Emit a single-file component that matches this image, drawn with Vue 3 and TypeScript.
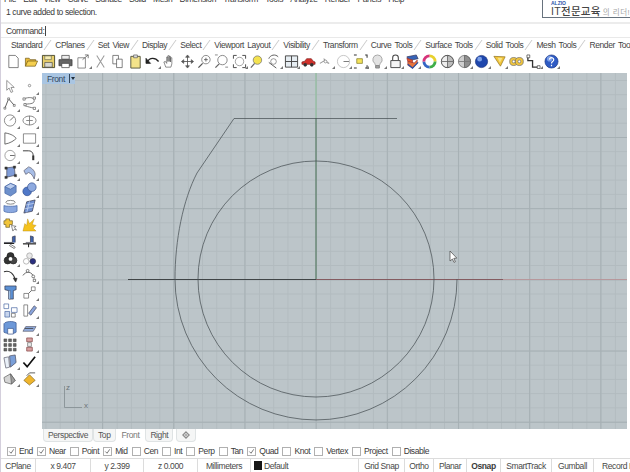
<script setup lang="ts">
interface Shape {
  d: string;
  fill?: string;
  stroke?: string;
  w?: number;
}

interface Icon {
  id: string;
  shapes: Shape[];
  more?: boolean;
}

const ink = "#3a3a3a";
const blue = "#6d90cc";
const yellow = "#f2c53a";

const circle = (x: number, y: number, r: number) =>
  `M${x - r} ${y}a${r} ${r} 0 1 0 ${r * 2} 0a${r} ${r} 0 1 0 ${-r * 2} 0z`;

const line = (d: string, stroke = ink, w = 0.9): Shape => ({ d, stroke, w, fill: "none" });
const solid = (d: string, fill: string, stroke = "#555", w = 0.7): Shape => ({ d, fill, stroke, w });

const menus = ["File", "Edit", "View", "Curve", "Surface", "Solid", "Mesh", "Dimension", "Transform", "Tools", "Analyze", "Render", "Panels", "Help"];
const tabs = ["Standard", "CPlanes", "Set View", "Display", "Select", "Viewport Layout", "Visibility", "Transform", "Curve Tools", "Surface Tools", "Solid Tools", "Mesh Tools", "Render Tools"];

const topIcons: Icon[] = [
  { id: "new", shapes: [solid("M3 1.5h7l3 3v10H3z", "#fff", "#444")] },
  { id: "open", shapes: [solid("M1.5 13V4.5h4l1 1.5h6v2", "#e7b93a", "#6b5414"), solid("M1.5 13l2.5-5.5h10.5L12 13z", "#f5cf4e", "#6b5414")] },
  { id: "save", shapes: [solid("M1.5 1.5h13v13h-13z", "#e8cf6a", "#4a4a30", 1), solid("M4 9h8v5H4z", "#d9d9cf", "#444"), solid("M4 2h7v4H4z", "#f7eeb4", "#665")] },
  { id: "print", shapes: [solid("M4 1.5h8v4H4z", "#eee", "#333"), solid("M1 6h14v6.5H1z", "#666", "#333"), solid("M4 10h8v4.5H4z", "#fff", "#333")] },
  { id: "import", more: true, shapes: [solid("M2 4h8v11H2z", "#fff", "#555"), line("M7 6l6-5M9.5 1H13v3.5", "#666")] },
  { id: "cut", shapes: [line("M4 1.5l8 13M12 1.5l-8 13", "#9a9a9a", 1.1)] },
  { id: "copy", shapes: [solid("M3 1.5h6v9H3z", "#fff", "#444"), solid("M7 5.5h6v9H7z", "#fff", "#444")] },
  { id: "paste", shapes: [solid("M3 2.5h10v12.5H3z", "#f4e38a", "#55553f", 1), solid("M6 1h4v3H6z", "#ddd", "#555")] },
  { id: "undo", more: true, shapes: [line("M2.5 8.5C5 3.5 11 3.5 14.5 8", "#222", 1.4), solid("M1 4.5l5 5.5H1z", "#222", "#222")] },
  { id: "hand", shapes: [solid("M4 14L2 8.5l1.6-.6L5 10V3.2h1.3V8V1.8h1.4V8V2.6h1.4V8.5V4h1.4v6.5l-1 3.5z", "#fff", "#555")] },
  { id: "pan", shapes: [line("M8 2v12M3 8h10", "#555"), solid("M8 1l2 2.5H6zM8 15l2-2.5H6zM1.5 8l2.5-2v4zM14.5 8L12 6v4z", "#555")] },
  { id: "zoom", shapes: [solid(circle(9.5, 6, 4.5), "#fff", "#555"), line("M6 10l-4.5 4.5", "#555", 1.4), line("M7.5 6h4M9.5 4v4", "#555")] },
  { id: "zoomwin", shapes: [{ d: circle(9, 6.5, 5), fill: "#fff", stroke: "#777", w: 0.9 }, line("M5.5 10.5l-4 4", "#666", 1.4), line("M1 1h3M12 14h3", "#777")] },
  { id: "zoomext", more: true, shapes: [solid(circle(8, 8, 4.5), "#fff", "#777"), line("M1.5 5V1.5H5M11 1.5h3.5V5M1.5 11v3.5H5M11 14.5h3.5V11", "#444", 1)] },
  { id: "zoomsel", shapes: [solid(circle(9, 6.5, 4.5), "#f4e24f", "#666"), line("M6 10l-4 4.5", "#666", 1.4)] },
  { id: "rotate", more: true, shapes: [line("M3 5A6 6 0 0 1 13 3M3 9l8 6", "#555", 1), solid(circle(8, 8, 3), "#fff", "#666")] },
  { id: "layout", more: true, shapes: [solid("M1.5 2h13v12h-13z", "#e6edf2", "#444", 1), line("M8 2v12M1.5 8h13", "#444", 1)] },
  { id: "car", shapes: [solid("M1 11V8.5l3-.8L6 5h5l2 2.7 2 .8V11z", "#d3322c", "#7c1d1a"), solid(circle(4.5, 11.5, 1.6), "#333", "#333"), solid(circle(11.5, 11.5, 1.6), "#333", "#333")] },
  { id: "osnap", more: true, shapes: [line("M2 10l5-3 5 3M6 5l5 5", "#999", 1.1), solid(circle(8, 8, 1.5), "#fff", "#777")] },
  { id: "clock", more: true, shapes: [solid(circle(8, 8, 6.5), "#fff", "#aaa"), line("M8 8h6", "#666")] },
  { id: "points", more: true, shapes: [solid("M4 5h6v5H4z", "#f5e35b", "#776f1a"), line("M1 1h3M13 1h2v3M1 15h3M13 15h2v-3", "#333", 1.1)] },
  { id: "bulb", more: true, shapes: [solid("M8 1a5 5 0 0 1 3 9l-1 2.5H6L5 10a5 5 0 0 1 3-9z", "#e3e3e3", "#888"), solid("M6 12.5h4V15H6z", "#aaa", "#666")] },
  { id: "lock", more: true, shapes: [line("M5 7V4a3 3 0 0 1 6 0v3", "#444", 1.1), solid("M3 7h10v7.5H3z", "#f4f4f4", "#444", 1)] },
  { id: "layer", more: true, shapes: [solid("M2 3l10-2 2 4-10 2z", "#3764b8", "#335"), solid("M2 4.5l6 2v3L3 8z", "#e8572a", "#933"), solid("M3 8l7 1.5 3-3v3l-5 5.5-5-3z", "#e8743b", "#933"), line("M3 11l5 4 6-6", "#2a4fa0", 1.3)] },
  { id: "wheel", shapes: [line("M8 2a6 6 0 0 1 6 6", "#e8d12e", 3), line("M14 8a6 6 0 0 1-6 6", "#3fae49", 3), line("M8 14a6 6 0 0 1-6-6", "#3466c4", 3), line("M2 8a6 6 0 0 1 6-6", "#d6337a", 3)] },
  { id: "sphere1", shapes: [solid(circle(8, 8, 6.5), "#bdbdbd", "#444", 1), solid("M8 1.5a6.5 6.5 0 0 0 0 13z", "#eee", "#444"), line("M1.5 8h13", "#666")] },
  { id: "sphere2", more: true, shapes: [solid(circle(8, 8, 6.5), "#cfcfcf", "#555"), solid("M8 1.5a6.5 6.5 0 0 1 0 13z", "#8f8f8f", "#555"), line("M1.5 8h13", "#777")] },
  { id: "sphere3", more: true, shapes: [solid(circle(8, 8, 6.5), "#1f47ad", "#18317a"), solid(circle(6, 5.5, 2.6), "#7da1e8", "none")] },
  { id: "arrow", more: true, shapes: [solid("M2 2.5l12 .5-5 10z", "#f2c53a", "#8a6d1d"), solid("M6 4l5 .3-2.6 5z", "#f7e48a", "none")] },
  { id: "gears", shapes: [solid(circle(5, 8, 4.3), "#f0c53f", "#666"), solid(circle(11, 8, 4.3), "#f0c53f", "#666"), solid(circle(5, 8, 1.5), "#fff", "#666"), solid(circle(11, 8, 1.5), "#fff", "#666")] },
  { id: "dims", more: true, shapes: [line("M2 2v5h5v7h7", "#333", 1.4), solid("M1 1h3v3H1zM12 12.5h3v3h-3z", "#fff", "#333")] },
  { id: "help", more: true, shapes: [solid(circle(8, 8, 7), "#2e5bc4", "#1d3a85"), solid(circle(6, 5, 3), "#7c9fe8", "none"), line("M5.8 6a2.3 2.2 0 1 1 3.4 2C8.2 8.6 8 9 8 10.2M8 11.4v1.6", "#fff", 1.3)] },
];

const sideIcons: Icon[] = [
  { id: "cursor", shapes: [solid("M4 1.5l8 7.5H8.5l2 4.5-2 .8-2-4.7L4 12z", "#fff", "#666")] },
  { id: "point", more: true, shapes: [solid(circle(8, 7, 1.3), "#fff", "#666")] },
  { id: "polyline", more: true, shapes: [line("M2 13L6 3l6 7", "#444"), solid("M1 12h2v2H1zM5 2h2v2H5zM11 9h2v2h-2z", "#fff", "#444", 0.6)] },
  { id: "cpcurve", more: true, shapes: [line("M2 3C7 1 13 1 13 5S7 8 3 9s9 4 11 4", "#666"), solid("M1 2h2.4v2.4H1zM12 1h2.4v2.4H12zM2 8h2.4v2.4H2zM12 12h2.4v2.4H12z", "#fff", "#444", 0.6)] },
  { id: "circle", more: true, shapes: [solid(circle(7.5, 8, 6), "#fff", "#555"), line("M7.5 8l4-4", "#555")] },
  { id: "ellipse", more: true, shapes: [solid("M1 8a7 4.8 0 1 0 14 0a7 4.8 0 1 0-14 0z", "#fff", "#555"), line("M8 3v10M4.5 8h7", "#777")] },
  { id: "arc", more: true, shapes: [line("M2 2C9 3 13 6 14 8c-2 2-6 5-12 6V2", "#555")] },
  { id: "rect", more: true, shapes: [solid("M1.5 3h13v10h-13z", "#fff", "#555")] },
  { id: "polygon", more: true, shapes: [solid(circle(7.5, 8, 5.5), "#fff", "#777"), line("M7.5 8h5", "#555")] },
  { id: "fillet", more: true, shapes: [line("M1 3h6c4 0 5 3 5 6", "#333", 1), line("M12 8v5", "#333", 2.2)] },
  { id: "patch", more: true, shapes: [solid("M4 3l8-1 1 9-9 2z", "#7f9cd8", "#445"), solid("M2 2h2.5v2.5H2zM11 1h2.5v2.5H11zM2 12h2.5v2.5H2zM12 10h2.5v2.5H12z", "#333", "#333", 0.4)] },
  { id: "loft", more: true, shapes: [solid("M2 6l5-4c4 1 7 5 7 8l-1 5c-1-3-3-6-6-7l-3 2z", "#a7bde6", "#556")] },
  { id: "cube", shapes: [solid("M2 5l6-3.5L14 4v7l-6 4-6-3z", blue, "#3f5f9f"), solid("M2 5l6 2.7L14 4 8 1.5z", "#b9ccee", "#3f5f9f")] },
  { id: "spheres", more: true, shapes: [solid(circle(5.5, 10, 4.6), "#4f78c8", "#34508c"), solid(circle(10.5, 5.5, 4.6), "#8eaae0", "#34508c")] },
  { id: "extrude", shapes: [line("M3 3.5a5 2 0 1 0 10 0a5 2 0 1 0-10 0", "#777"), solid("M1 7c2 1 12 1 14 0v6c-2 2-12 2-14 0z", "#8aa8e0", "#3f5f9f")] },
  { id: "mesh", more: true, shapes: [solid("M5 3l9-2-3 12-9 2z", "#6f8fd0", "#334"), line("M8 2.5l-3 12M4 6.5l9 -2M3 10.5l9-2", "#cfe0f7", 0.7)] },
  { id: "pieces", shapes: [solid("M3 2h4v2h3v4H7v3H3V8H1V4h2z", yellow, "#6d5a20"), solid("M9 9l1.5 6 1.5-2 2.5 1L12 11l2-1z", "#fff", "#555")] },
  { id: "burst", shapes: [solid("M1 15L3 7l2 2 1-7 2 5 5-5-2 6 4 1-3 3 3 3z", "#f5c21c", "#a97f10", 0.4)] },
  { id: "trim", shapes: [solid("M1 9h9V3l3-1v7", "#3f63ab", "#334"), line("M1 10h11", "#222", 1.3), solid("M8 11l5 3-1 1.5-5-3z", "#fff", "#444")] },
  { id: "split", shapes: [solid("M4 9h5V2l3 1v6h3", "#3f63ab", "#334"), line("M1 10.5h14", "#222", 1.3), line("M7 10.5V14", "#222", 1.1)] },
  { id: "boolean", more: true, shapes: [solid(circle(8, 5.5, 3.8), "#333", "#222"), solid(circle(5, 10, 3.8), "#333", "#222"), solid(circle(11, 10, 3.8), "#444", "#222"), solid(circle(8, 8.5, 2), "#fff", "none")] },
  { id: "booldiff", more: true, shapes: [solid(circle(8, 5, 3), "#e9e9e9", "#999"), solid(circle(4.5, 11, 3), "#fff", "#999"), solid(circle(11.5, 11, 3), "#2a2f80", "#334")] },
  { id: "curvearrow", shapes: [line("M1 4c6-2 11 2 12 9", "#333", 1.1), solid("M13.5 15l-2.5-4h4z", "#333", "#333")] },
  { id: "curvepts", more: true, shapes: [line("M1 8c3-5 10-5 12 3", "#555"), solid(circle(6, 3, 1.5), "#fff", "#444"), solid(circle(12, 9, 1.5), "#fff", "#444"), solid("M12 12h2.5v2.5H12z", "#fff", "#444")] },
  { id: "tee", shapes: [solid("M2 1h12v4l-3 1v9H6V6L2 5z", "#5b90d4", "#334"), solid("M6 6h2v9H6z", "#a6c5ea", "#334", 0.3)] },
  { id: "scale", more: true, shapes: [solid("M2 9h5v5H2z", "#fff", "#555"), solid("M10 2h4v4h-4z", "#fff", "#555"), line("M7 9l3-3", "#555")] },
  { id: "group", shapes: [solid("M1 1h5v5H1z", "#fff", "#3f5f9f"), solid("M9 5h6v5H9z", "#fff", "#3f5f9f"), solid("M2 9h5v6H2z", "#c8d5ee", "#3f5f9f"), solid("M9 11h4v4H9z", "#fff", "#555")] },
  { id: "ruler", more: true, shapes: [solid("M2 2h4v12H2z", "#fff", "#555"), solid("M7 11l6-8 2.5 2-6 8z", "#8aa5dc", "#445")] },
  { id: "block", shapes: [solid("M1 4c2-3 10-3 13-1v10c-2 2-10 2-13 0z", "#6d98d8", "#334e88"), solid("M5 9h6v6H5z", "#fff", "#334e88")] },
  { id: "plane", more: true, shapes: [solid("M4 7h11l-3 5H1z", "#93aee0", "#556"), line("M3 9h9", "#333", 0.8)] },
  { id: "array", shapes: [solid("M1 2h3v3H1zM6 2h3v3H6zM11 2h3v3h-3zM1 7h3v3H1zM6 7h3v3H6zM11 7h3v3h-3zM1 12h3v3H1zM6 12h3v3H6zM11 12h3v3h-3z", "#666", "#333", 0.5)] },
  { id: "chain", more: true, shapes: [solid("M5 1h6v4H5z", "#d8a0a0", "#7b3a3a"), solid("M6 6h4v4H6z", "#eee", "#666"), solid("M5 11h6v4H5z", "#d8a0a0", "#7b3a3a")] },
  { id: "pages", more: true, shapes: [solid("M1 4l5-1 1 11-4 1z", "#eaf0f8", "#556"), solid("M7 2l6-1 1 8-6 5z", "#7a9fd8", "#445")] },
  { id: "check", shapes: [line("M1.5 9l4 4.5L14 3", "#111", 1.8)] },
  { id: "shell", more: true, shapes: [solid("M1 7l7-4 5 7-4 4-7-2z", "#d5d5d5", "#555"), solid("M8 3l5 7-4 4z", "#9f9f9f", "#555")] },
  { id: "diamond", more: true, shapes: [line("M5 5l3-3h6", "#444"), solid("M8 4l6 6-6 5-6-5z", "#efb52d", "#7e6421")] },
];

const snaps = [
  { label: "End", on: true },
  { label: "Near", on: true },
  { label: "Point", on: false },
  { label: "Mid", on: true },
  { label: "Cen", on: false },
  { label: "Int", on: false },
  { label: "Perp", on: false },
  { label: "Tan", on: false },
  { label: "Quad", on: true },
  { label: "Knot", on: false },
  { label: "Vertex", on: false },
  { label: "Project", on: false },
  { label: "Disable", on: false },
];

const coords = [
  { text: "CPlane", width: 35 },
  { text: "x 9.407", width: 55 },
  { text: "y 2.399", width: 53 },
  { text: "z 0.000", width: 54 },
  { text: "Millimeters", width: 53 },
];

const panes = [
  { text: "Grid Snap", width: 46 },
  { text: "Ortho", width: 29 },
  { text: "Planar", width: 33 },
  { text: "Osnap", width: 34, bold: true },
  { text: "SmartTrack", width: 51 },
  { text: "Gumball", width: 42 },
];
</script>

<template>
  <div class="app">
    <nav class="menu">
      <span v-for="m in menus" :key="m">{{ m }}</span>
    </nav>
    <div class="history">1 curve added to selection.</div>
    <div class="command">
      <span>Command:</span>
      <i class="caret" />
    </div>

    <div class="tabs">
      <span v-for="t in tabs" :key="t" class="tab">{{ t }}</span>
    </div>

    <div class="toolbar">
      <span v-for="icon in topIcons" :key="icon.id" class="tool" :class="{ more: icon.more }">
        <svg viewBox="0 0 16 16" width="15" height="15">
          <path
            v-for="(s, i) in icon.shapes"
            :key="i"
            :d="s.d"
            :fill="s.fill ?? 'none'"
            :stroke="s.stroke ?? 'none'"
            :stroke-width="s.w ?? 1"
          />
        </svg>
      </span>
    </div>

    <div class="main">
      <aside class="side">
        <span v-for="icon in sideIcons" :key="icon.id" class="tool" :class="{ more: icon.more }">
          <svg viewBox="0 0 16 16" width="15" height="15">
            <path
              v-for="(s, i) in icon.shapes"
              :key="i"
              :d="s.d"
              :fill="s.fill ?? 'none'"
              :stroke="s.stroke ?? 'none'"
              :stroke-width="s.w ?? 1"
            />
          </svg>
        </span>
      </aside>

      <section class="viewport">
        <svg class="scene" viewBox="42 73 585 356" width="585" height="356">
          <path d="M316 73V118" stroke="#8fc49c" stroke-width="1" fill="none" />
          <path d="M316 118V279" stroke="#4a7559" stroke-width="1" fill="none" />
          <path d="M128 279.5H316" stroke="#33383a" stroke-width="0.9" fill="none" />
          <path d="M316 279.5H503" stroke="#7f5157" stroke-width="0.9" fill="none" />
          <path d="M503 279.5H627" stroke="#b89498" stroke-width="0.9" fill="none" />
          <circle cx="316" cy="279" r="118" fill="none" stroke="#4a5255" stroke-width="0.75" />
          <path
            d="M457 279A141 141 0 0 1 175 279C175 240 183 200 197 173L234 118.5H397"
            fill="none"
            stroke="#4a5255"
            stroke-width="0.75"
          />
          <path d="M64.5 386V407.5H82" fill="none" stroke="#828b8f" stroke-width="0.8" />
          <text x="66" y="390" class="axis-label">z</text>
          <text x="84" y="408" class="axis-label">x</text>
          <path d="M450 251v10l2.4-2 1.6 3.4 1.4-.7-1.6-3.3 3-.3z" fill="#fff" stroke="#444" stroke-width="0.7" />
        </svg>
        <div class="view-label">
          <span>Front</span>
          <i class="view-sep" />
          <i class="view-arrow" />
        </div>
      </section>
    </div>

    <div class="view-tabs">
      <span class="view-tab">Perspective</span>
      <span class="view-tab">Top</span>
      <span class="view-tab current">Front</span>
      <span class="view-tab">Right</span>
      <span class="view-tab add">
        <svg viewBox="0 0 10 10" width="8" height="8">
          <path d="M5 1l4 4-4 4-4-4z" fill="none" stroke="#8b8b8b" stroke-width="1.4" />
          <path d="M5 3v4M3 5h4" stroke="#8b8b8b" stroke-width="1" />
        </svg>
      </span>
    </div>

    <div class="snaps">
      <label v-for="s in snaps" :key="s.label" class="snap">
        <span class="box">
          <svg v-if="s.on" viewBox="0 0 8 8" width="7" height="7">
            <path d="M1.5 4l2 2 3-4.5" fill="none" stroke="#555" stroke-width="0.9" />
          </svg>
        </span>
        {{ s.label }}
      </label>
    </div>

    <footer class="status">
      <span v-for="c in coords" :key="c.text" class="cell" :style="{ width: c.width + 'px' }">{{ c.text }}</span>
      <span class="cell layer">
        <i class="swatch" />
        Default
      </span>
      <span
        v-for="p in panes"
        :key="p.text"
        class="cell"
        :class="{ bold: p.bold }"
        :style="{ width: p.width + 'px' }"
      >{{ p.text }}</span>
      <span class="record">Record History</span>
    </footer>

    <div class="logo">
      <b class="logo-brand">ALZIO</b>
      <div class="logo-line"><b>IT전문교육</b><span>의 리더!</span></div>
    </div>
  </div>
</template>

<style>
html,
body {
  margin: 0;
  background: #fff;
}
</style>

<style scoped>
.app {
  position: relative;
  width: 630px;
  height: 472px;
  overflow: hidden;
  display: flex;
  flex-direction: column;
  background: #fff;
  color: #3a3a3a;
  font-family: "Liberation Sans", Arial, sans-serif;
  font-size: 8.5px;
  letter-spacing: -0.4px;
  border-left: 1px solid #d4cfdc;
  box-sizing: border-box;
}

.menu {
  height: 5px;
  flex: none;
  display: flex;
  align-items: flex-end;
  gap: 7.2px;
  padding-left: 3px;
  overflow: hidden;
  line-height: 11px;
}

.history {
  height: 19px;
  flex: none;
  padding: 1px 0 0 5px;
  box-sizing: border-box;
  line-height: 12px;
  border-bottom: 2px solid #ececec;
}

.command {
  height: 14px;
  flex: none;
  display: flex;
  align-items: center;
  gap: 1px;
  padding-left: 5px;
  box-sizing: border-box;
  border-bottom: 1px solid #e9e9e9;
}

.caret {
  width: 1px;
  height: 10px;
  background: #444;
}

.tabs {
  height: 13px;
  flex: none;
  display: flex;
  align-items: center;
  gap: 13px;
  padding: 1px 0 0 10px;
  box-sizing: border-box;
  white-space: nowrap;
  word-spacing: 1.2px;
  color: #444;
}

.tab {
  position: relative;
  flex: none;
}

.tab + .tab::before {
  content: "";
  position: absolute;
  left: -8px;
  top: 0;
  height: 10px;
  border-left: 1px solid #c9c9c9;
  transform: skewX(-35deg);
}

.toolbar {
  height: 20px;
  flex: none;
  display: flex;
  align-items: center;
  padding-left: 4px;
  margin-bottom: 2px;
}

.toolbar .tool {
  width: 17.35px;
}

.tool {
  position: relative;
  display: flex;
  align-items: center;
  justify-content: center;
  flex: none;
}

.tool.more::after {
  content: "";
  position: absolute;
  right: 0;
  bottom: 0;
  border-style: solid;
  border-width: 0 0 3px 3px;
  border-color: transparent transparent #777 transparent;
}

.main {
  height: 356px;
  flex: none;
  display: flex;
}

.side {
  width: 41px;
  flex: none;
  display: grid;
  grid-template-columns: 19px 19px;
  grid-auto-rows: 17.2px;
  align-content: start;
  align-items: center;
  justify-items: center;
  padding: 5px 0 0 0;
}

.side .tool {
  width: 19px;
  height: 17px;
}

.viewport {
  position: relative;
  width: 585px;
  height: 356px;
  flex: none;
  background-color: #bcc5c9;
  background-image:
    linear-gradient(to right, #a6b0b4 1px, transparent 1px),
    linear-gradient(to bottom, #a6b0b4 1px, transparent 1px),
    linear-gradient(to right, #b2bbbf 1px, transparent 1px),
    linear-gradient(to bottom, #b2bbbf 1px, transparent 1px);
  background-size: 71.2px 71.2px, 71.2px 71.2px, 14.24px 14.24px, 14.24px 14.24px;
  background-position: 60px 0, 0 64px, 3.5px 0, 0 7px;
}

.scene {
  position: absolute;
  left: 0;
  top: 0;
}

.axis-label {
  font-size: 8px;
  fill: #6d7579;
  font-family: "Liberation Sans", Arial, sans-serif;
}

.view-label {
  position: absolute;
  left: 0;
  top: 0;
  width: 33px;
  height: 11px;
  display: flex;
  align-items: center;
  padding-left: 5px;
  box-sizing: border-box;
  background: #a9c5e2;
  color: #33475c;
}

.view-sep {
  width: 1px;
  height: 9px;
  margin-left: 4px;
  background: #33475c;
}

.view-arrow {
  margin-left: 2px;
  border-style: solid;
  border-width: 3px 2.5px 0 2.5px;
  border-color: #1f2d3b transparent transparent transparent;
}

.view-tabs {
  height: 15px;
  flex: none;
  display: flex;
  padding-left: 42px;
  color: #555;
}

.view-tab {
  height: 13px;
  display: flex;
  align-items: center;
  padding: 0 4px;
  background: #f5f6f6;
  border: 1px solid #dfe3e4;
  border-top: none;
  border-radius: 0 0 4px 4px;
  box-sizing: border-box;
}

.view-tab.current {
  background: #fff;
  border-color: #fff;
  color: #777;
  padding: 0 5px;
}

.view-tab.add {
  margin-left: 3px;
  padding: 0 5px;
}

.snaps {
  height: 14px;
  flex: none;
  display: flex;
  align-items: center;
  gap: 4px;
  padding-left: 6px;
  white-space: nowrap;
}

.snap {
  display: flex;
  align-items: center;
  gap: 3px;
}

.box {
  width: 9px;
  height: 9px;
  box-sizing: border-box;
  border: 1px solid #b0b0b0;
  background: #fff;
  display: block;
}

.box svg {
  display: block;
}

.status {
  flex: 1;
  display: flex;
  align-items: stretch;
  border-top: 1px solid #dcdcdc;
  white-space: nowrap;
  color: #484848;
}

.cell {
  flex: none;
  display: flex;
  align-items: center;
  justify-content: center;
  box-sizing: border-box;
  border-right: 1px solid #dcdcdc;
  overflow: hidden;
}

.cell.bold {
  font-weight: bold;
  color: #3a3a3a;
}

.cell.layer {
  width: 108px;
  justify-content: flex-start;
  gap: 2px;
  padding-left: 3px;
}

.swatch {
  width: 8px;
  height: 9px;
  background: #161616;
}

.record {
  flex: none;
  display: flex;
  align-items: center;
  padding-left: 8px;
}

.logo {
  position: absolute;
  right: 0;
  top: -3px;
  width: 88px;
  height: 21px;
  box-sizing: border-box;
  border: 1px solid #67727d;
  border-right: none;
  background: #fff;
  padding: 2px 0 0 8px;
  font-family: "Liberation Sans", "Noto Sans CJK KR", sans-serif;
  letter-spacing: 0;
}

.logo-brand {
  display: block;
  color: #2c55a8;
  font-size: 5px;
  line-height: 6px;
}

.logo-line {
  display: flex;
  align-items: baseline;
  gap: 2px;
  line-height: 11px;
  white-space: nowrap;
  font-size: 10.5px;
  letter-spacing: 0.3px;
  color: #444;
}

.logo-line b {
  font-weight: 500;
}

.logo-line span {
  color: #a5a5a5;
  font-size: 7.5px;
  letter-spacing: 0.5px;
}
</style>
